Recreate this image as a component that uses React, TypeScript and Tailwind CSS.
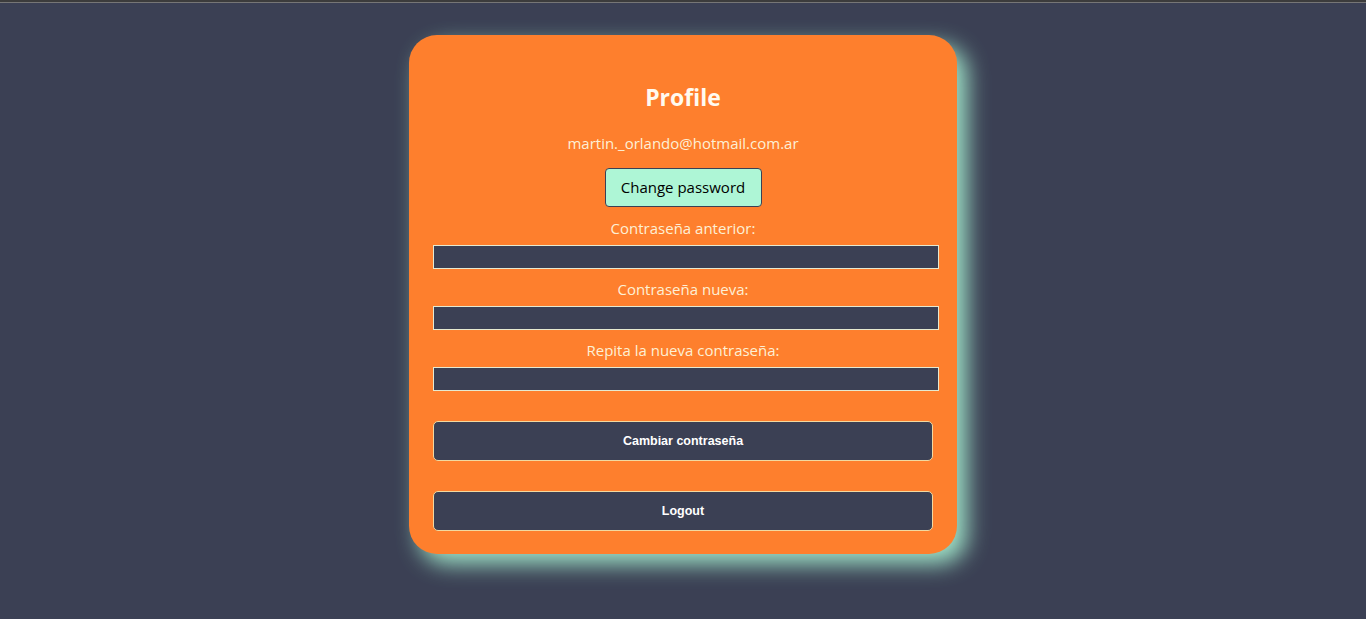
import React from "react";

export default function App() {
  const font = { fontFamily: '"Open Sans", "Noto Sans", sans-serif' };
  return (
    <div className="w-full min-h-[619px] bg-[#3b4054] flex flex-col" style={font}>
      <div className="h-[2px] bg-[#3c3c3c]" />
      <div className="h-[1px] bg-[#767676]" />
      <div className="flex justify-center pt-[32px]">
        <div className="w-[548px] h-[519px] bg-[#fe7f2d] rounded-[28px] shadow-[10px_10px_22px_rgba(170,244,212,0.9)] flex flex-col items-center pt-[46px] pb-[23px] px-[24px]">
          <h1 className="text-[23px] leading-[32px] font-bold text-[#fffaf0]">Profile</h1>
          <p className="mt-[18px] text-[15px] leading-[24px] text-[#fdf0d5]">martin._orlando@hotmail.com.ar</p>
          <button className="mt-[13px] w-[157px] h-[40px] bg-[#aef6d6] border border-[#3b4054] rounded-[4px] text-[15px] text-black">
            Change password
          </button>
          {["Contraseña anterior:", "Contraseña nueva:", "Repita la nueva contraseña:"].map((l, i) => (
            <div key={l} className={"self-stretch flex flex-col " + (i === 0 ? "mt-[9px]" : "mt-[8px]")}>
              <label className="text-center text-[15px] leading-[24px] text-[#fdf0d5]">{l}</label>
              <input className="mt-[5px] w-[506px] h-[24px] bg-[#3b4054] border border-[#e6ead0] outline-none" type="password" />
            </div>
          ))}
          <div className="self-start flex flex-col">
            <button
              className="mt-[30px] w-[500px] h-[40px] bg-[#3b4054] border border-[#f2d9a0] rounded-[5px] text-white text-[12.5px] font-bold"
              style={{ fontFamily: '"Liberation Sans", Arial, sans-serif' }}
            >
              Cambiar contraseña
            </button>
            <button
              className="mt-[30px] w-[500px] h-[40px] bg-[#3b4054] border border-[#f2d9a0] rounded-[5px] text-white text-[12.5px] font-bold"
              style={{ fontFamily: '"Liberation Sans", Arial, sans-serif' }}
            >
              Logout
            </button>
          </div>
        </div>
      </div>
    </div>
  );
}
